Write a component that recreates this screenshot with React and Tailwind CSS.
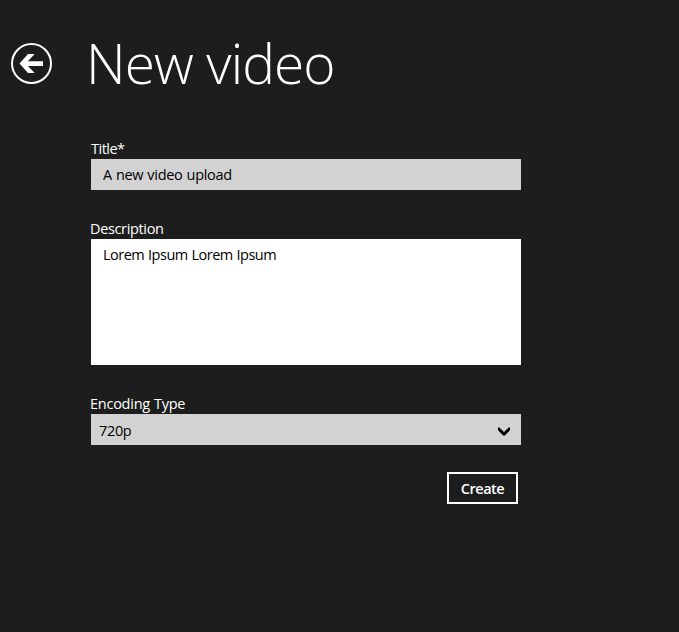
import React, { useState } from "react";

const ENCODING_TYPES = ["720p", "1080p", "480p"];

const BackButton = () => (
  <button type="button" aria-label="Back" className="h-[42px] w-[42px] shrink-0">
    <svg width="42" height="42" viewBox="0 0 42 42" fill="none">
      <circle cx="21.5" cy="21.5" r="19.5" stroke="#fff" strokeWidth="2" />
      <path d="M9.5 21.5 18 12h6.700l-6.800 7.200H33v4.800H17.900l6.800 7H18z" fill="#fff" />
    </svg>
  </button>
);

const Field = ({ label, htmlFor, labelClass, children }) => (
  <div className="flex flex-col">
    <label htmlFor={htmlFor} className={`h-5 self-start text-[14.5px] leading-5 whitespace-nowrap text-white ${labelClass}`}>
      {label}
    </label>
    {children}
  </div>
);

export default function App() {
  const [title, setTitle] = useState("A new video upload");
  const [description, setDescription] = useState("Lorem Ipsum Lorem Ipsum");
  const [encoding, setEncoding] = useState(ENCODING_TYPES[0]);

  return (
    <div className="h-screen overflow-hidden bg-[#1d1d1d] font-['Open_Sans','Noto_Sans',sans-serif] text-white">
      <header className="flex items-start pt-[42px] pl-[10px]">
        <BackButton />
        <h1 className="-mt-[19px] mb-[2px] ml-[34px] h-[80px] text-[55px] leading-[80px] font-light tracking-[-0.9px] whitespace-nowrap">
          New video
        </h1>
      </header>

      <form onSubmit={(e) => e.preventDefault()} className="mt-[34px] ml-[91px] flex w-[430px] flex-col">
        <Field label="Title*" htmlFor="title" labelClass="tracking-[-0.5px]">
          <input
            id="title"
            value={title}
            onChange={(e) => setTitle(e.target.value)}
            className="h-[31px] bg-[#d2d2d2] px-3 text-[14.5px] tracking-[-0.3px] text-black outline-none [word-spacing:0.6px]"
          />
        </Field>

        <div className="mt-[29px]">
          <Field label="Description" htmlFor="description" labelClass="-ml-px tracking-[-0.35px]">
            <textarea
              id="description"
              value={description}
              onChange={(e) => setDescription(e.target.value)}
              className="h-[126px] resize-none bg-white px-3 py-[6px] text-[14.5px] leading-5 tracking-[-0.5px] text-black outline-none [word-spacing:0.5px]"
            />
          </Field>
        </div>

        <div className="mt-[29px]">
          <Field label="Encoding Type" htmlFor="encoding" labelClass="-ml-px tracking-[-0.25px] [word-spacing:0.5px]">
            <div className="grid h-[31px] bg-[#d2d2d2] text-black">
              <select
                id="encoding"
                value={encoding}
                onChange={(e) => setEncoding(e.target.value)}
                className="col-start-1 row-start-1 appearance-none pt-[2px] pl-2 text-[14.5px] tracking-[-0.35px] outline-none"
              >
                {ENCODING_TYPES.map((type) => (
                  <option key={type} value={type}>{type}</option>
                ))}
              </select>
              <svg
                className="pointer-events-none col-start-1 row-start-1 mt-[13px] mr-[11px] justify-self-end"
                width="12"
                height="9"
                viewBox="0 0 12 9"
              >
                <path d="M0 .6 1.300 .6 6 4.900 10.700 .6 12 .6V3.300L6.800 8.500H5.200L0 3.300z" fill="#000" />
              </svg>
            </div>
          </Field>
        </div>

        <button
          type="submit"
          className="mt-[27px] mr-[3px] h-8 w-[71px] self-end border-2 border-white pt-px text-[14.5px] leading-7 font-semibold tracking-[-0.5px]"
        >
          Create
        </button>
      </form>
    </div>
  );
}
